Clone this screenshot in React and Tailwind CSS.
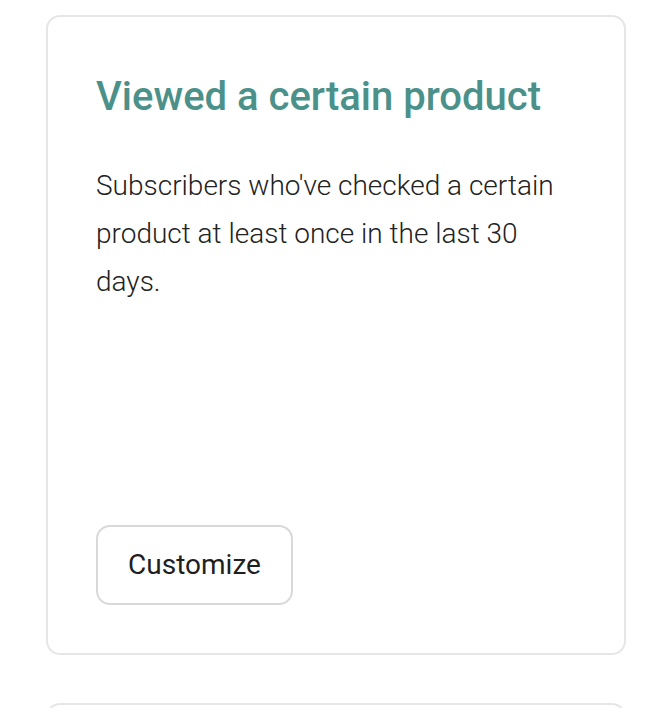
import React from "react";

function SegmentCard({ title, description }) {
  return (
    <div className="flex h-[640px] flex-col rounded-[14px] border-2 border-[#e6e6e6] bg-white px-[48px] pt-[54px] pb-[48px]">
      <h2 className="text-[40px] font-medium leading-[52px] text-[#4b918a]">{title}</h2>
      <p className="mt-[39px] max-w-[470px] text-[28px] font-light leading-[48px] text-[#222]">{description}</p>
      <div className="mt-auto">
        <button className="h-[80px] w-[197px] rounded-[14px] border-2 border-[#d9d9d9] bg-white text-[28px] text-[#1f1f1f]">
          Customize
        </button>
      </div>
    </div>
  );
}

export default function App() {
  return (
    <div className="min-h-screen bg-white pl-[46px] pr-[42px] pt-[15px]" style={{ fontFamily: "Roboto, 'Liberation Sans', sans-serif" }}>
      <div className="flex flex-col gap-[48px]">
        <SegmentCard
          title="Viewed a certain product"
          description="Subscribers who've checked a certain product at least once in the last 30 days."
        />
        {/* next card, only its top edge is in view */}
        <div className="h-[640px] rounded-[14px] border-2 border-[#e6e6e6] bg-white" />
      </div>
    </div>
  );
}
